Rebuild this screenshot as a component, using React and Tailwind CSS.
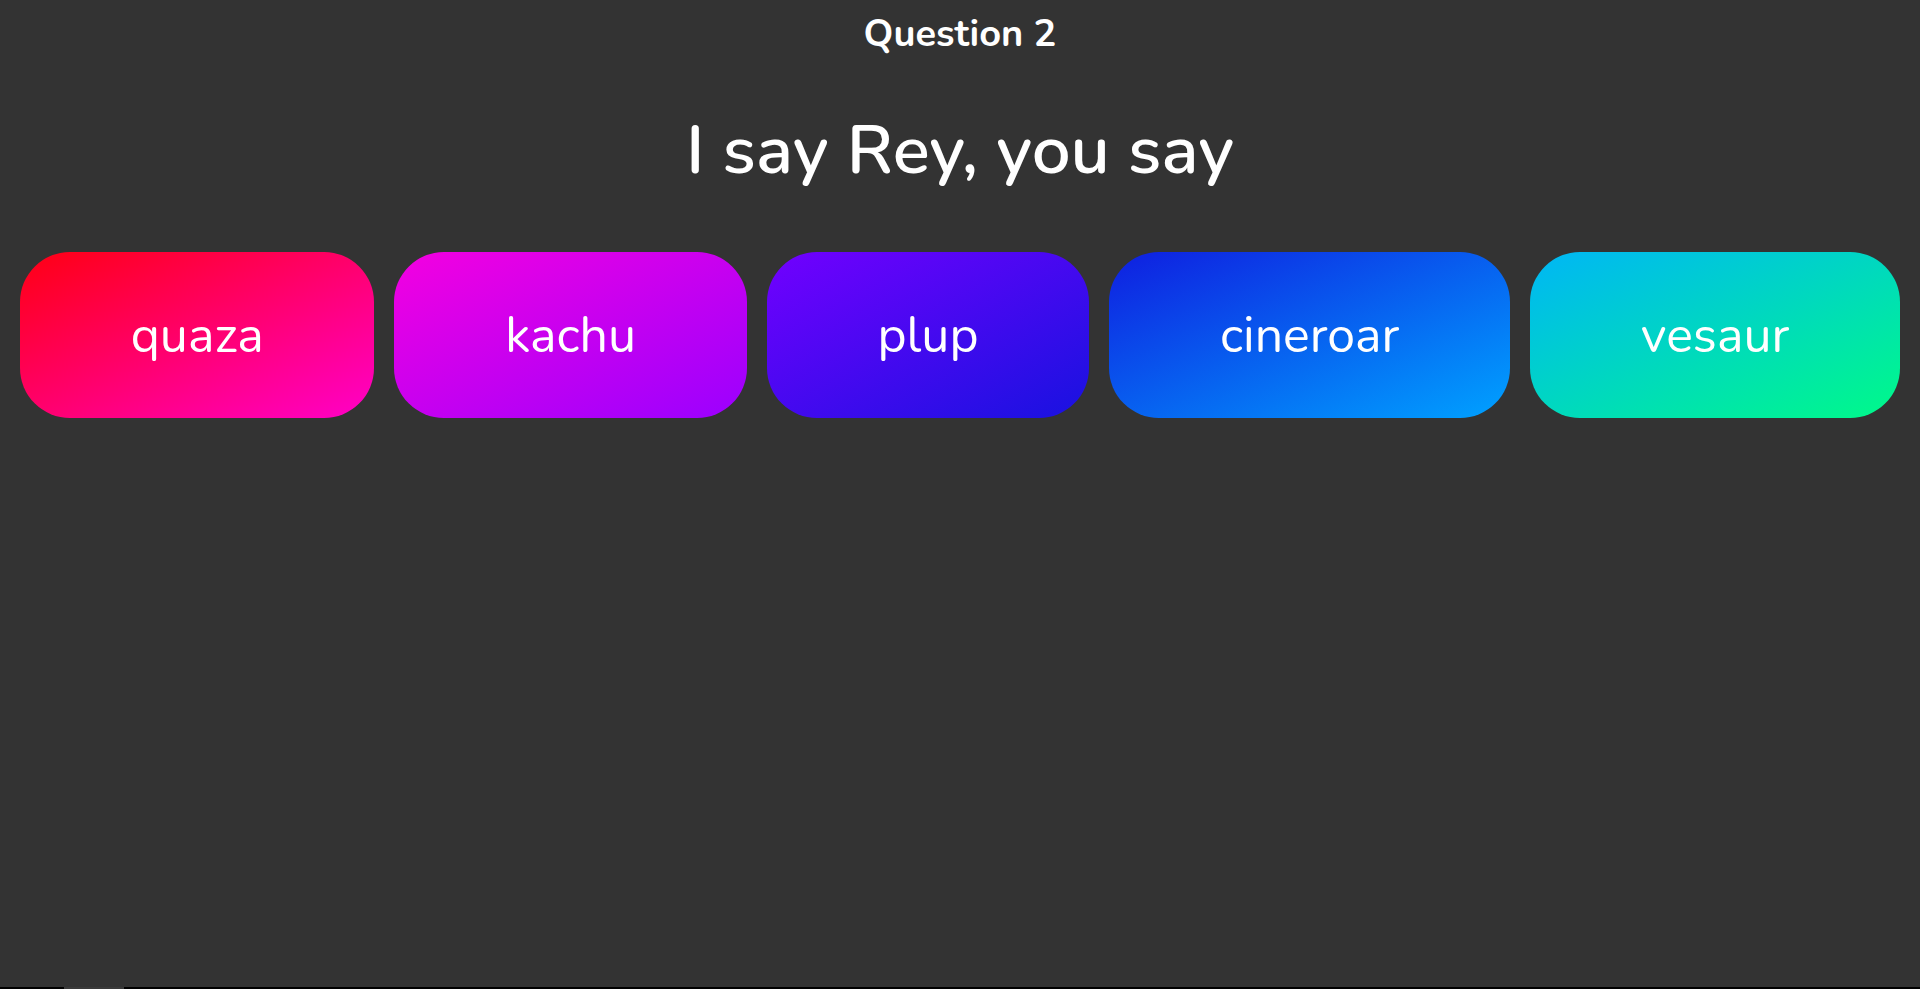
const answers = [
  {label: "quaza", bg: "bg-[linear-gradient(to_bottom_right,#ff0012,#ff00c8)]"},
  {label: "kachu", bg: "bg-[linear-gradient(to_bottom_right,#f400e0,#9a00ff)]"},
  {label: "plup", bg: "bg-[linear-gradient(to_bottom_right,#7200ff,#1812e0)]"},
  {label: "cineroar", bg: "bg-[linear-gradient(to_bottom_right,#0f1ee0,#00a2ff)]"},
  {label: "vesaur", bg: "bg-[linear-gradient(to_bottom_right,#00b6f6,#00fa88)]"},
];

const App = () => {
  return (
    <div
      className="h-[989px] bg-[#333333] text-white flex flex-col overflow-hidden"
      style={{fontFamily: '"Nunito", Lato, "Open Sans", sans-serif'}}
    >
      {/* Header */}
      <h2 className="mt-[12px] text-center text-[38px] font-bold leading-[44px]">
        Question 2
      </h2>
      <h1 className="mt-[49px] text-center text-[69px] font-semibold leading-[90px]">
        I say Rey, you say
      </h1>

      {/* Answers */}
      <div className="mt-[57px] flex gap-5 px-5">
        {answers.map((a) => (
          <button
            key={a.label}
            className={`grow h-[166px] rounded-[50px] px-[108px] flex items-center justify-center text-[50px] text-white ${a.bg}`}
          >
            {a.label}
          </button>
        ))}
      </div>

      <div className="mt-auto h-[2px] bg-black">
        <div className="ml-[64px] h-full w-[60px] bg-[#3a3a3a]" />
      </div>
    </div>
  );
};

export default App;
